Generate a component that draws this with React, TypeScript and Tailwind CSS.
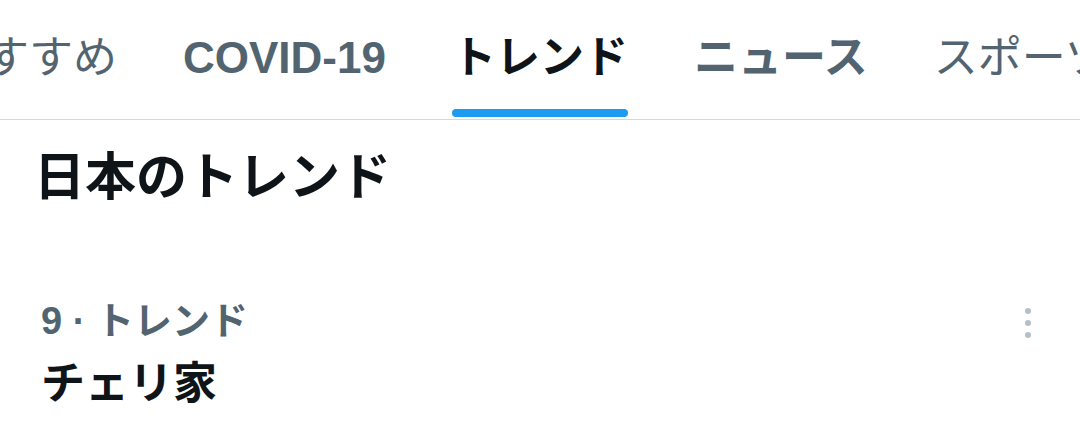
import React from 'react';

const font = "font-['Liberation_Sans','Noto_Sans_CJK_JP',sans-serif]";

const tabs = [
  { label: 'おすすめ', weight: 'font-normal', color: 'text-[#536471]', active: false },
  { label: 'COVID-19', weight: 'font-bold', color: 'text-[#536471]', active: false },
  { label: 'トレンド', weight: 'font-bold', color: 'text-[#0f1419]', active: true },
  { label: 'ニュース', weight: 'font-bold', color: 'text-[#536471]', active: false },
  { label: 'スポーツ', weight: 'font-normal', color: 'text-[#536471]', active: false },
];

const App = () => {
  return (
    <div className={`w-[1080px] h-[437px] bg-white overflow-hidden ${font}`}>
      {/* tab bar */}
      <div className="h-[120px] border-b border-[#cfd9de] overflow-hidden">
        <div className="flex h-full gap-[66px] ml-[-59px] whitespace-nowrap">
          {tabs.map((t) => (
            <div key={t.label} className="flex flex-col h-full shrink-0">
              <span className={`pt-[31px] text-[44px] leading-[54px] ${t.weight} ${t.color}`}>
                {t.label}
              </span>
              <div
                className={`mt-auto mb-[2px] h-[8px] rounded-full ${t.active ? 'bg-[#1d9bf0]' : 'bg-transparent'}`}
              />
            </div>
          ))}
        </div>
      </div>

      <h1 className="pl-[34px] pt-[28px] text-[51px] leading-[60px] font-bold text-[#0f1419]">
        日本のトレンド
      </h1>

      <div className="flex justify-between items-start pl-[41px] pr-[49px] mt-[91px]">
        <div>
          <div className="text-[38px] leading-[44px] font-bold text-[#536471]">9 · トレンド</div>
          <div className="mt-[16px] text-[44px] leading-[50px] font-bold text-[#0f1419]">チェリ家</div>
        </div>
        <div className="flex flex-col items-center gap-[6px] pt-[9px]">
          <span className="w-[6px] h-[6px] rounded-full bg-[#b4c0c8]" />
          <span className="w-[6px] h-[6px] rounded-full bg-[#b4c0c8]" />
          <span className="w-[6px] h-[6px] rounded-full bg-[#b4c0c8]" />
        </div>
      </div>
    </div>
  );
};

export default App;
